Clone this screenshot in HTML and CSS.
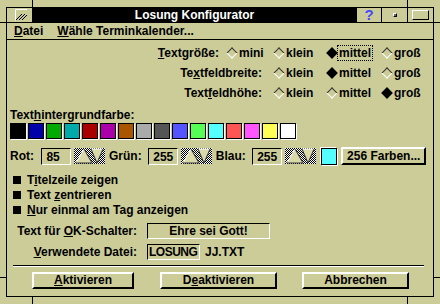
FILE: index.html
```html
<!DOCTYPE html>
<html lang="de">
<head>
    <meta charset="UTF-8">
    <title>Losung Konfigurator</title>
    <link rel="stylesheet" href="styles.css">
</head>
<body>
    <div class="frame">
        <div class="window">
            <div class="titlebar">
                <div class="sysmenu">
                    <svg width="25" height="14" viewBox="0 0 25 14">
                        <path d="M8.5 12.5 V1.5 H20" stroke="#fff" fill="none"/>
                        <path d="M9 12 L15 6 M12 12 L18 6 M15 12 L20 7" stroke="#000" fill="none"/>
                    </svg>
                </div>
                <div class="title">Losung Konfigurator</div>
                <div class="tbtn help">?</div>
                <div class="tbtn min"><span class="min-glyph"></span></div>
                <div class="tbtn max"><span class="max-glyph"></span></div>
            </div>

            <div class="menubar">
                <span><u>D</u>atei</span>
                <span><u>W</u>ähle Terminkalender...</span>
            </div>

            <div class="client">
                <div class="radio-grid">
                    <div class="rlabel"><u>T</u>extgröße:</div>
                    <div class="opt"><i class="dia"></i><span>mini</span></div>
                    <div class="opt"><i class="dia"></i><span>klein</span></div>
                    <div class="opt"><i class="dia on"></i><span class="focus">mittel</span></div>
                    <div class="opt"><i class="dia"></i><span>groß</span></div>

                    <div class="rlabel wide">Te<u>x</u>tfeldbreite:</div>
                    <div class="opt"><i class="dia"></i><span>klein</span></div>
                    <div class="opt"><i class="dia on"></i><span>mittel</span></div>
                    <div class="opt"><i class="dia"></i><span>groß</span></div>

                    <div class="rlabel wide">Text<u>f</u>eldhöhe:</div>
                    <div class="opt"><i class="dia"></i><span>klein</span></div>
                    <div class="opt"><i class="dia"></i><span>mittel</span></div>
                    <div class="opt"><i class="dia on"></i><span>groß</span></div>
                </div>

                <div class="section-label">Text<u>h</u>intergrundfarbe:</div>
                <div class="swatches">
                    <span class="sw" style="background:#000000"></span>
                    <span class="sw" style="background:#0000aa"></span>
                    <span class="sw" style="background:#00aa00"></span>
                    <span class="sw" style="background:#00aaaa"></span>
                    <span class="sw" style="background:#aa0000"></span>
                    <span class="sw" style="background:#aa00aa"></span>
                    <span class="sw" style="background:#aa5500"></span>
                    <span class="sw" style="background:#aaaaaa"></span>
                    <span class="sw" style="background:#555555"></span>
                    <span class="sw" style="background:#5555ff"></span>
                    <span class="sw" style="background:#55ff55"></span>
                    <span class="sw" style="background:#55ffff"></span>
                    <span class="sw" style="background:#ff5555"></span>
                    <span class="sw" style="background:#ff55ff"></span>
                    <span class="sw" style="background:#ffff55"></span>
                    <span class="sw" style="background:#ffffff"></span>
                </div>

                <div class="rgb">
                    <span class="lbl rot">Rot:</span>
                    <span class="field num">85</span>
                    <span class="spin"><svg width="31" height="16" viewBox="0 0 31 16"><path d="M2 15 L10 1 L18 15 Z" fill="#d8d8a8"/><path d="M2 15 L10 1" stroke="#fff"/><path d="M10 1 L18 15 L2 15" stroke="#333" fill="none"/><path d="M17 1 L29 1 L23 15 Z" fill="#d8d8a8"/><path d="M17 1 L29 1" stroke="#fff"/><path d="M29 1 L23 15 L17 1" stroke="#333" fill="none"/></svg></span>
                    <span class="lbl gruen">Grün:</span>
                    <span class="field num">255</span>
                    <span class="spin"><svg width="31" height="16" viewBox="0 0 31 16"><path d="M2 15 L10 1 L18 15 Z" fill="#d8d8a8"/><path d="M2 15 L10 1" stroke="#fff"/><path d="M10 1 L18 15 L2 15" stroke="#333" fill="none"/><path d="M17 1 L29 1 L23 15 Z" fill="#d8d8a8"/><path d="M17 1 L29 1" stroke="#fff"/><path d="M29 1 L23 15 L17 1" stroke="#333" fill="none"/></svg></span>
                    <span class="lbl blau">Blau:</span>
                    <span class="field num">255</span>
                    <span class="spin"><svg width="31" height="16" viewBox="0 0 31 16"><path d="M2 15 L10 1 L18 15 Z" fill="#d8d8a8"/><path d="M2 15 L10 1" stroke="#fff"/><path d="M10 1 L18 15 L2 15" stroke="#333" fill="none"/><path d="M17 1 L29 1 L23 15 Z" fill="#d8d8a8"/><path d="M17 1 L29 1" stroke="#fff"/><path d="M29 1 L23 15 L17 1" stroke="#333" fill="none"/></svg></span>
                    <span class="current"></span>
                    <span class="btn farben">256 Farben...</span>
                </div>

                <div class="checks">
                    <div class="check"><i class="box"></i><span>T<u>i</u>telzeile zeigen</span></div>
                    <div class="check"><i class="box"></i><span>Text <u>z</u>entrieren</span></div>
                    <div class="check"><i class="box"></i><span><u>N</u>ur einmal am Tag anzeigen</span></div>
                </div>

                <div class="fields">
                    <div class="flabel">Text für <u>O</u>K-Schalter:</div>
                    <div><span class="field ok">Ehre sei Gott!</span></div>
                    <div class="flabel"><u>V</u>erwendete Datei:</div>
                    <div class="file-row"><span class="field file">LOSUNG</span><span>JJ.TXT</span></div>
                </div>

                <div class="sep"></div>

                <div class="buttons">
                    <span class="btn akt"><u>A</u>ktivieren</span>
                    <span class="btn deakt">D<u>e</u>aktivieren</span>
                    <span class="btn abbr">Abbrechen</span>
                </div>
            </div>
        </div>

        <span class="tick top-l"></span>
        <span class="tick top-r"></span>
        <span class="tick bot-l"></span>
        <span class="tick bot-r"></span>
        <span class="tick left-t"></span>
        <span class="tick left-b"></span>
        <span class="tick right-t"></span>
        <span class="tick right-b"></span>
    </div>
</body>
</html>
```

FILE: styles.css
```css
body {
    margin: 0;
    background-color: #cccc99;
    font-family: "Liberation Sans", Arial, sans-serif;
    font-weight: bold;
    font-size: 12px;
    color: #000;
}
u {
    text-underline-offset: 1px;
}
.frame {
    position: relative;
    width: 440px;
    height: 304px;
    box-sizing: border-box;
    padding: 7px 6px;
}
.window {
    height: 100%;
    box-sizing: border-box;
    border: 1px solid #000;
    display: flex;
    flex-direction: column;
}

/* title bar */
.titlebar {
    display: flex;
    height: 14px;
    border-bottom: 1px solid #000;
}
.sysmenu {
    width: 25px;
    border-right: 1px solid #000;
}
.sysmenu svg {
    display: block;
}
.title {
    flex: 1;
    background-color: #000;
    color: #fff;
    text-align: center;
    line-height: 14px;
}
.tbtn {
    width: 25px;
    border-left: 1px solid #000;
    display: flex;
    align-items: center;
    justify-content: center;
}
.tbtn.help {
    width: 24px;
    color: #4848ff;
    font-size: 15px;
    line-height: 14px;
}
.min-glyph {
    width: 2px;
    height: 2px;
    border: 1px solid;
    border-color: #fff #000 #000 #fff;
    background-color: #666;
}
.max-glyph {
    width: 15px;
    height: 8px;
    border: 1px solid;
    border-color: #fff #000 #000 #fff;
}

/* menu */
.menubar {
    height: 16px;
    border-bottom: 1px solid #000;
    display: flex;
    align-items: center;
    gap: 14px;
    padding-left: 7px;
}

/* client area */
.client {
    flex: 1;
    padding: 3px 7px 0 3px;
}
.radio-grid {
    display: grid;
    grid-template-columns: 1fr 47px 53px 55px 45px;
    grid-auto-rows: 20px;
    align-items: center;
}
.rlabel {
    text-align: right;
    padding-right: 7px;
}
.rlabel.wide {
    grid-column: 1 / 3;
    padding-right: 11px;
}
.opt {
    display: flex;
    align-items: center;
}
.opt span {
    border: 1px solid transparent;
    padding: 0 1px;
    margin-left: 1px;
    line-height: 14px;
}
.opt span.focus {
    border: 1px dotted #000;
}
.dia {
    display: block;
    width: 6px;
    height: 6px;
    margin-left: 2px;
    border: 1px solid;
    border-color: #333 #fff #fff #333;
    transform: rotate(45deg);
}
.dia.on {
    background-color: #000;
    border-color: #000;
}

.section-label {
    margin-top: 5px;
    line-height: 14px;
}
.swatches {
    display: flex;
    gap: 2px;
    margin-top: 1px;
}
.sw {
    width: 14px;
    height: 14px;
    border: 1px solid #000;
    box-shadow: 1px 1px 0 #fff;
}

.rgb {
    display: flex;
    align-items: center;
    height: 18px;
    margin-top: 8px;
}
.lbl.rot { width: 32px; }
.lbl.gruen { width: 40px; }
.lbl.blau { width: 37px; }
.field {
    display: inline-block;
    box-sizing: border-box;
    border: 1px solid;
    border-color: #000 #fff #fff #000;
    line-height: 14px;
}
.field.num {
    width: 30px;
    height: 17px;
    padding: 1px 0 0 4px;
    margin-right: 3px;
}
.spin {
    width: 31px;
    height: 16px;
    margin-right: 4px;
    background: repeating-conic-gradient(#000 0 25%, #fff 0 50%) 0 0 / 2px 2px;
}
.spin svg {
    display: block;
}
.current {
    width: 15px;
    height: 15px;
    border: 1px solid #000;
    box-shadow: 1px 1px 0 #fff, -1px -1px 0 #fff;
    background-color: #55ffff;
    margin: 0 4px 0 1px;
}
.btn {
    display: inline-block;
    box-sizing: border-box;
    border: 2px solid;
    border-color: #fff #000 #000 #fff;
    text-align: center;
    line-height: 13px;
}
.btn.farben {
    width: 86px;
    height: 18px;
    line-height: 14px;
}

.checks {
    margin-top: 7px;
}
.check {
    display: flex;
    align-items: center;
    height: 15px;
}
.box {
    width: 8px;
    height: 8px;
    background-color: #000;
    margin: 0 6px 0 3px;
}

.fields {
    display: grid;
    grid-template-columns: 127px auto;
    column-gap: 10px;
    row-gap: 5px;
    margin-top: 6px;
    align-items: center;
}
.flabel {
    text-align: right;
}
.fields .field {
    height: 16px;
    display: block;
}
.field.ok {
    width: 123px;
    text-align: center;
}
.file-row {
    display: flex;
    align-items: center;
    gap: 5px;
}
.field.file {
    width: 53px;
    padding-left: 1px;
    letter-spacing: -0.5px;
}

.sep {
    margin: 5px 2px 0 3px;
    border-top: 1px solid #000;
    border-bottom: 1px solid #fff;
}
.buttons {
    display: flex;
    margin-top: 5px;
    padding-left: 22px;
}
.buttons .btn {
    height: 17px;
}
.btn.akt { width: 102px; margin-right: 26px; }
.btn.deakt { width: 117px; margin-right: 25px; }
.btn.abbr { width: 107px; }

/* sizing border corner marks */
.tick {
    position: absolute;
    background-color: #000;
}
.tick.top-l { left: 32px; top: 0; width: 1px; height: 7px; }
.tick.top-r { left: 407px; top: 0; width: 1px; height: 7px; }
.tick.bot-l { left: 32px; bottom: 0; width: 1px; height: 7px; }
.tick.bot-r { left: 407px; bottom: 0; width: 1px; height: 7px; }
.tick.left-t { left: 0; top: 22px; width: 6px; height: 1px; }
.tick.left-b { left: 0; top: 277px; width: 6px; height: 1px; }
.tick.right-t { right: 0; top: 22px; width: 6px; height: 1px; }
.tick.right-b { right: 0; top: 277px; width: 6px; height: 1px; }
```
